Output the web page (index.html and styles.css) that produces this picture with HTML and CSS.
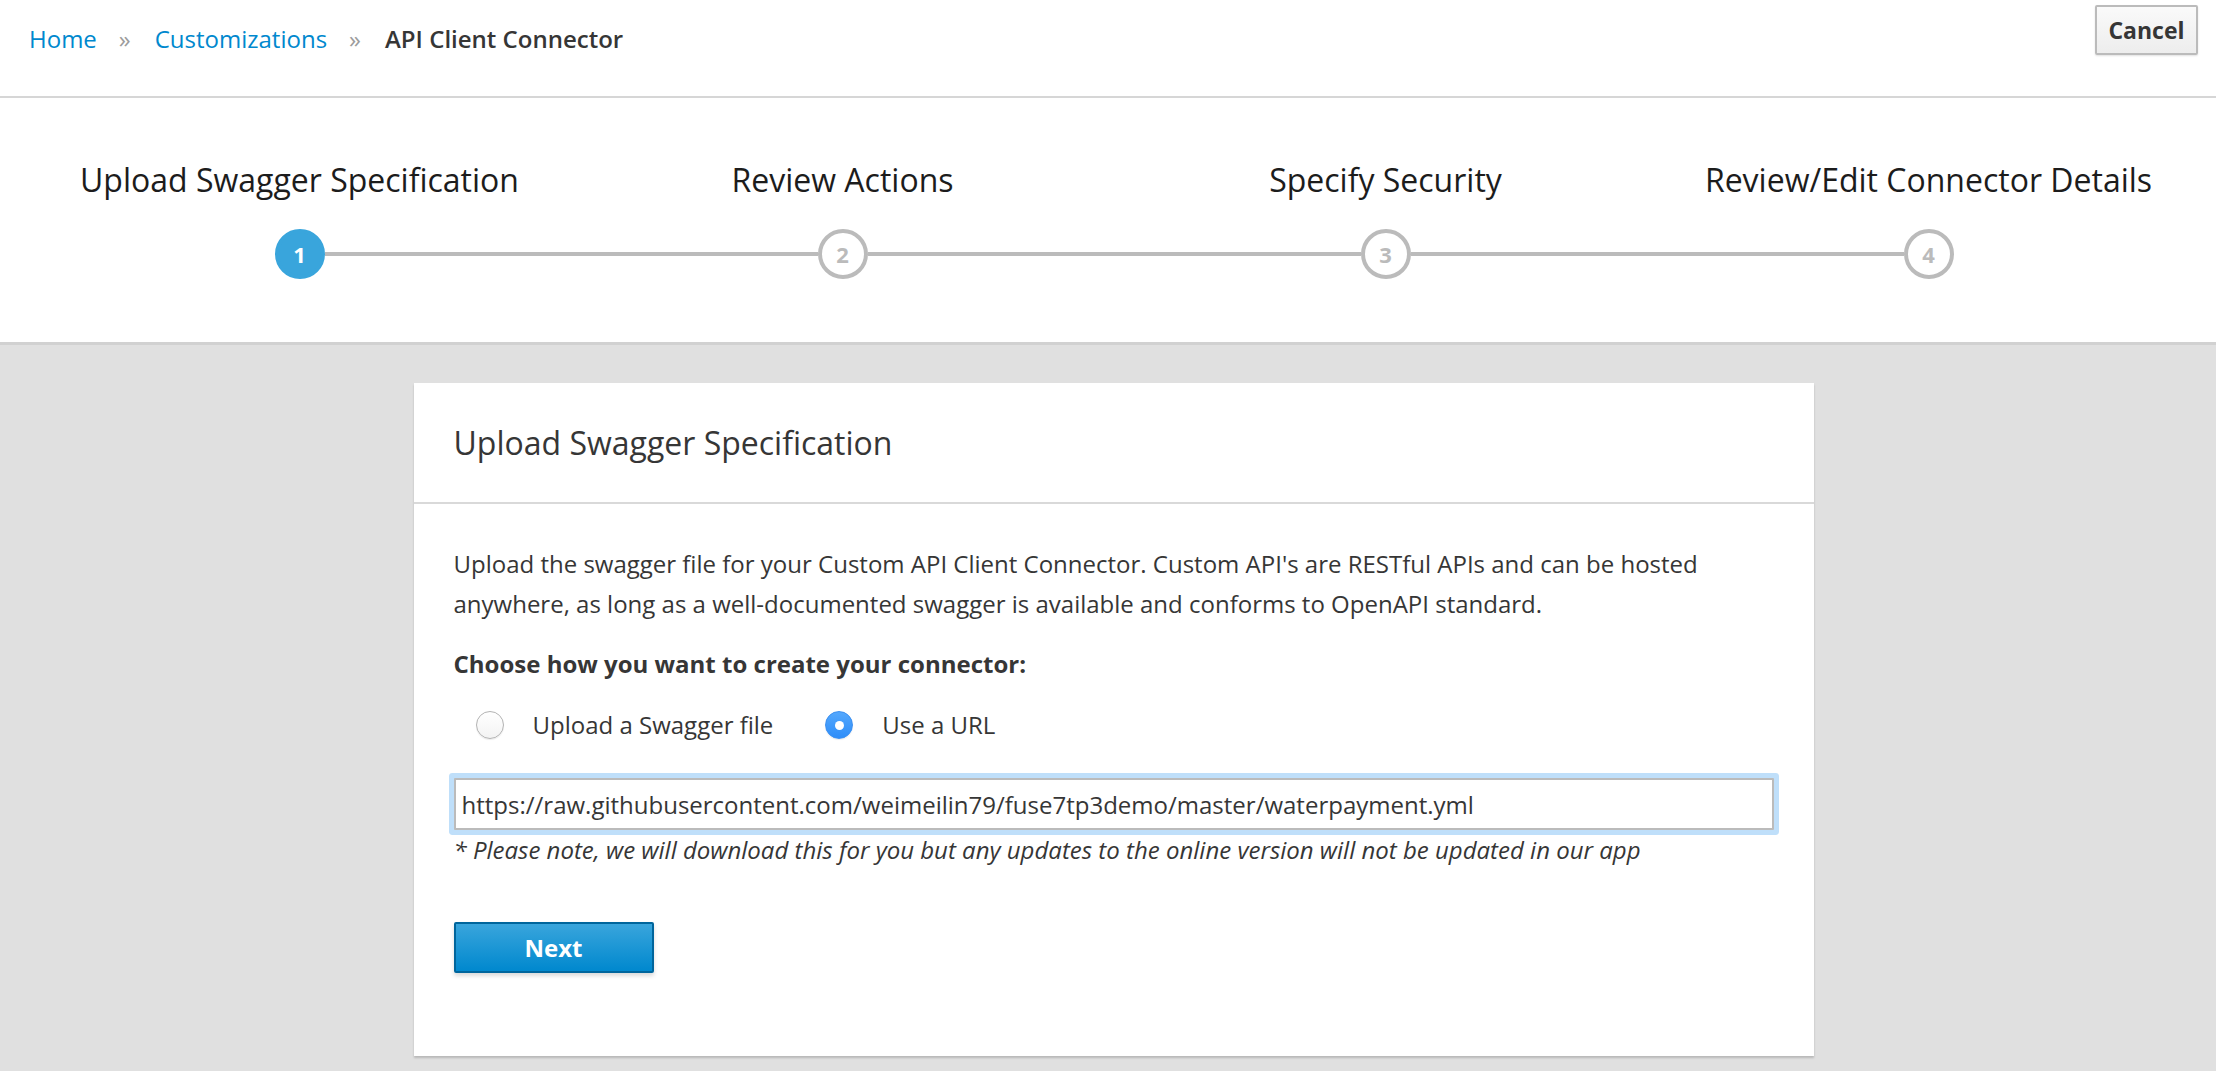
FILE: index.html
```html
<!DOCTYPE html>
<html lang="en">
<head>
<meta charset="utf-8">
<title>API Client Connector</title>
<link rel="stylesheet" href="styles.css">
</head>
<body>
<header class="topbar">
  <nav class="breadcrumb">
    <a class="crumb-link" href="#">Home</a><span class="sep">»</span><a class="crumb-link" href="#">Customizations</a><span class="sep">»</span><span class="crumb-current">API Client Connector</span>
  </nav>
  <button class="btn-cancel" type="button">Cancel</button>
</header>

<section class="wizard">
  <ol class="steps">
    <li class="step active">
      <div class="step-title">Upload Swagger Specification</div>
      <div class="step-track"><span class="track-line hidden"></span><span class="step-circle">1</span><span class="track-line"></span></div>
    </li>
    <li class="step">
      <div class="step-title">Review Actions</div>
      <div class="step-track"><span class="track-line"></span><span class="step-circle">2</span><span class="track-line"></span></div>
    </li>
    <li class="step">
      <div class="step-title">Specify Security</div>
      <div class="step-track"><span class="track-line"></span><span class="step-circle">3</span><span class="track-line"></span></div>
    </li>
    <li class="step">
      <div class="step-title">Review/Edit Connector Details</div>
      <div class="step-track"><span class="track-line"></span><span class="step-circle">4</span><span class="track-line hidden"></span></div>
    </li>
  </ol>
</section>

<main class="content">
  <div class="card">
    <div class="card-heading">
      <h2 class="card-title">Upload Swagger Specification</h2>
    </div>
    <div class="card-body">
      <p class="intro">Upload the swagger file for your Custom API Client Connector. Custom API's are RESTful APIs and can be hosted anywhere, as long as a well-documented swagger is available and conforms to OpenAPI standard.</p>
      <div class="choose-label">Choose how you want to create your connector:</div>
      <div class="radio-row">
        <label class="radio-option"><span class="radio"></span>Upload a Swagger file</label>
        <label class="radio-option second"><span class="radio checked"></span>Use a URL</label>
      </div>
      <input class="url-input" type="text" value="https://raw.githubusercontent.com/weimeilin79/fuse7tp3demo/master/waterpayment.yml">
      <p class="note">* Please note, we will download this for you but any updates to the online version will not be updated in our app</p>
      <button class="btn-next" type="button">Next</button>
    </div>
  </div>
</main>
</body>
</html>
```

FILE: styles.css
```css
* { box-sizing: border-box; }

html, body {
  margin: 0;
  padding: 0;
}

body {
  background: #e0e0e0;
  font-family: "Open Sans", "Noto Sans", "Liberation Sans", sans-serif;
  font-size: 24px;
  line-height: 40px;
  color: #363636;
  min-height: 1071px;
}

/* Header */
.topbar {
  height: 98px;
  background: #fff;
  border-bottom: 2px solid #d6d6d6;
  display: flex;
  justify-content: space-between;
  align-items: flex-start;
}

.breadcrumb {
  padding: 19px 0 0 29px;
  display: flex;
  align-items: center;
  white-space: nowrap;
}

.crumb-link {
  color: #0088ce;
  text-decoration: none;
}

.sep {
  color: #9c9c9c;
  padding: 0 24px 0 22px;
  font-size: 24px;
  font-weight: 400;
}

.crumb-current {
  color: #363636;
  font-weight: 600;
}

.btn-cancel {
  margin: 5px 18px 0 0;
  width: 103px;
  height: 50px;
  padding: 0;
  font-family: "Open Sans", "Noto Sans", sans-serif;
  font-size: 23px;
  font-weight: 700;
  color: #363636;
  background: linear-gradient(to bottom, #fafafa 0%, #ededed 100%);
  border: 2px solid #bbb;
  border-radius: 2px;
  box-shadow: 0 1px 2px rgba(0, 0, 0, 0.12);
}

/* Wizard */
.wizard {
  background: #fff;
  padding: 60px 16px 63px 28px;
  border-bottom: 3px solid #d1d1d1;
}

.steps {
  list-style: none;
  margin: 0;
  padding: 0;
  display: grid;
  grid-template-columns: repeat(4, 1fr);
}

.step {
  display: flex;
  flex-direction: column;
  align-items: stretch;
}

.step-title {
  text-align: center;
  font-size: 32px;
  line-height: 44px;
  color: #1c1c1c;
  white-space: nowrap;
}

.step-track {
  margin-top: 27px;
  display: flex;
  align-items: center;
  height: 50px;
}

.track-line {
  flex: 1;
  height: 4px;
  background: #bbbbbb;
}

.track-line.hidden {
  background: transparent;
}

.step-circle {
  width: 50px;
  height: 50px;
  border-radius: 50%;
  border: 4px solid #bbbbbb;
  background: #fff;
  color: #bbbbbb;
  font-weight: 700;
  font-size: 22px;
  display: flex;
  align-items: center;
  justify-content: center;
  line-height: 1;
}

.step.active .step-circle {
  background: #39a5dc;
  border-color: #39a5dc;
  color: #fff;
}

/* Content */
.content {
  padding: 38px 0 0 11px;
}

.card {
  width: 1400px;
  margin: 0 auto;
  background: #fff;
  box-shadow: 0 2px 2px rgba(3, 3, 3, 0.18);
}

.card-heading {
  padding: 38px 40px 37px;
  border-bottom: 2px solid #d9d9d9;
}

.card-title {
  margin: 0;
  font-size: 32px;
  line-height: 44px;
  font-weight: 400;
  color: #363636;
}

.card-body {
  padding: 40px 40px 83px;
}

.intro {
  margin: 0 0 20px;
}

.choose-label {
  font-weight: 700;
  margin-bottom: 21px;
}

.radio-row {
  height: 40px;
  display: flex;
  align-items: center;
  padding-left: 22px;
}

.radio-option {
  display: flex;
  align-items: center;
}

.radio-option.second {
  margin-left: 52px;
}

.radio {
  width: 28px;
  height: 28px;
  border-radius: 50%;
  margin-right: 29px;
  background: linear-gradient(to bottom, #ffffff 0%, #f3f3f3 100%);
  border: 1px solid #b3b3b3;
  box-shadow: 0 1px 1px rgba(0, 0, 0, 0.08);
  display: flex;
  align-items: center;
  justify-content: center;
}

.radio.checked {
  background: linear-gradient(to bottom, #54a8fd 0%, #2d8df9 100%);
  border-color: #3b8ff0;
}

.radio.checked::after {
  content: "";
  width: 9px;
  height: 9px;
  border-radius: 50%;
  background: #fff;
}

.url-input {
  display: block;
  width: 100%;
  height: 52px;
  margin-top: 33px;
  padding: 0 6px;
  font-family: "Open Sans", "Noto Sans", sans-serif;
  font-size: 24px;
  color: #363636;
  background: #fff;
  border: 2px solid #bbb;
  border-radius: 1px;
  box-shadow: 0 0 0 5px #bfdffa;
  outline: none;
}

.note {
  margin: 0;
  font-style: italic;
  color: #363636;
}

.btn-next {
  display: block;
  margin-top: 52px;
  width: 200px;
  height: 51px;
  padding: 0;
  font-family: "Open Sans", "Noto Sans", sans-serif;
  font-size: 24px;
  font-weight: 700;
  color: #fff;
  background: linear-gradient(to bottom, #39a5dc 0%, #0088ce 100%);
  border: 2px solid #00659c;
  border-radius: 2px;
  box-shadow: 0 3px 4px rgba(0, 0, 0, 0.15);
}
```
